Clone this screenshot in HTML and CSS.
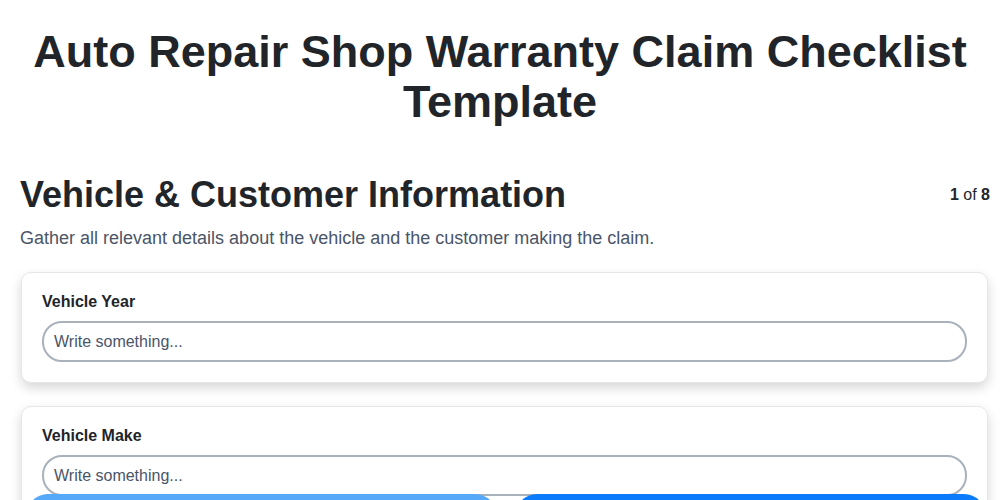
FILE: index.html
```html
<!DOCTYPE html>
<html lang="en">
<head>
<meta charset="utf-8">
<title>Auto Repair Shop Warranty Claim Checklist Template</title>
<link rel="stylesheet" href="styles.css">
</head>
<body>
<main class="page">
  <h1 class="title">Auto Repair Shop Warranty Claim Checklist Template</h1>
  <section class="step">
    <div class="step-head">
      <h2 class="step-title">Vehicle &amp; Customer Information</h2>
      <div class="step-count"><b>1</b> of <b>8</b></div>
    </div>
    <p class="step-desc">Gather all relevant details about the vehicle and the customer making the claim.</p>
    <div class="card">
      <label class="field-label" for="f1">Vehicle Year</label>
      <input class="field-input" id="f1" type="text" placeholder="Write something...">
    </div>
    <div class="card">
      <label class="field-label" for="f2">Vehicle Make</label>
      <input class="field-input" id="f2" type="text" placeholder="Write something...">
    </div>
    <div class="card">
      <label class="field-label" for="f3">Vehicle Model</label>
      <input class="field-input" id="f3" type="text" placeholder="Write something...">
    </div>
  </section>
</main>
<footer class="nav">
  <button class="btn btn-prev" type="button">Previous</button>
  <button class="btn btn-next" type="button">Next</button>
</footer>
</body>
</html>
```
FILE: styles.css
```css
* { box-sizing: border-box; }
html, body { margin: 0; padding: 0; background: #ffffff; }
body {
  font-family: "Liberation Sans", Arial, sans-serif;
  color: #212529;
}
.page {
  padding: 27px 10px 80px 10px;
}
.title {
  margin: 0 0 46px;
  text-align: center;
  font-size: 45px;
  line-height: 50px;
  font-weight: 700;
  color: #212529;
}
.step {
  padding-left: 10px;
}
.step-head {
  display: flex;
  justify-content: space-between;
  align-items: center;
}
.step-title {
  margin: 0;
  font-size: 36px;
  line-height: 44px;
  font-weight: 700;
}
.step-count {
  font-size: 16px;
  color: #212529;
}
.step-desc {
  margin: 9px 0 22px;
  font-size: 18px;
  line-height: 24px;
  color: #4a5568;
}
.card {
  margin: 0 2px 23px 1px;
  padding: 20px;
  border: 1px solid #e5e7eb;
  border-radius: 10px;
  background: #fff;
  box-shadow: 0 5px 12px rgba(0, 0, 0, 0.16);
}
.field-label {
  display: block;
  margin-bottom: 10px;
  font-size: 16px;
  line-height: 18px;
  font-weight: 700;
  color: #212529;
}
.field-input {
  display: block;
  width: 100%;
  height: 41px;
  padding: 0 10px;
  border: 2px solid #a9b1bb;
  border-radius: 20px;
  font-family: "Liberation Sans", Arial, sans-serif;
  font-size: 16px;
  color: #212529;
  background: #fff;
}
.field-input::placeholder { color: #4a5568; opacity: 1; }
.nav {
  position: fixed;
  left: 26px;
  right: 14px;
  top: 494px;
  display: flex;
  gap: 18px;
}
.btn {
  flex: 1;
  height: 64px;
  border: none;
  border-radius: 22px;
  font-family: "Liberation Sans", Arial, sans-serif;
  font-size: 16px;
  font-weight: 700;
  color: #fff;
}
.btn-prev { background: #56a8f8; }
.btn-next { background: #0a7cfb; }
```
